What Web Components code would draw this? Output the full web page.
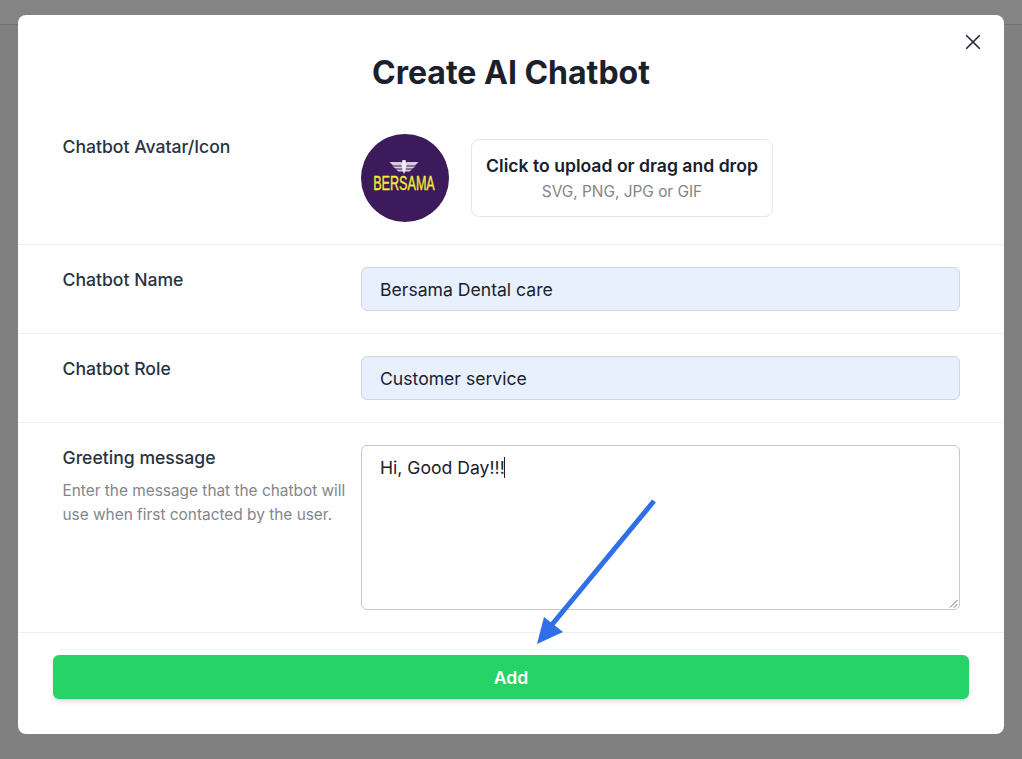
<!DOCTYPE html>
<html lang="en">
<head>
<meta charset="utf-8">
<title>Create AI Chatbot</title>
<style>
  html, body { margin: 0; height: 100%; }
  body { background: #808080; font-family: Inter, "Liberation Sans", sans-serif; overflow: hidden; }
</style>
</head>
<body>
<modal-backdrop>
  <chatbot-modal>
    <form-row label="Chatbot Avatar/Icon" variant="first">
      <avatar-upload></avatar-upload>
    </form-row>
    <form-row label="Chatbot Name">
      <text-field value="Bersama Dental care"></text-field>
    </form-row>
    <form-row label="Chatbot Role">
      <text-field value="Customer service"></text-field>
    </form-row>
    <form-row label="Greeting message" hint="Enter the message that the chatbot will use when first contacted by the user.">
      <message-area value="Hi, Good Day!!!"></message-area>
    </form-row>
  </chatbot-modal>
  <arrow-mark></arrow-mark>
</modal-backdrop>

<script>
class ModalBackdrop extends HTMLElement {
    constructor() {
        super();
        this.attachShadow({ mode: 'open' });
        this.shadowRoot.innerHTML = `
            <style>
                :host {
                    display: block;
                    position: relative;
                    width: 1022px;
                    height: 759px;
                    background: #808080;
                    overflow: hidden;
                }
                .topbar {
                    height: 24px;
                    border-bottom: 1px solid #737373;
                    background: #848484;
                }
                .layer {
                    position: absolute;
                    inset: 0;
                    padding: 15px 18px;
                    box-sizing: border-box;
                }
            </style>
            <div class="topbar"></div>
            <div class="layer"><slot></slot></div>
        `;
    }
}

class ChatbotModal extends HTMLElement {
    constructor() {
        super();
        this.attachShadow({ mode: 'open' });
        this.shadowRoot.innerHTML = `
            <style>
                :host {
                    display: block;
                    position: relative;
                    width: 986px;
                    height: 719px;
                    background: #fff;
                    border-radius: 8px;
                    font-family: Inter, "Liberation Sans", sans-serif;
                    color: #1a202c;
                }
                h1 {
                    margin: 0;
                    padding-top: 36px;
                    height: 83px;
                    box-sizing: border-box;
                    font-size: 32px;
                    line-height: 43px;
                    font-weight: 700;
                    text-align: center;
                }
                .close {
                    position: absolute;
                    top: 17.5px;
                    right: 22.5px;
                    width: 18px;
                    height: 18px;
                    padding: 0;
                    border: 0;
                    background: none;
                    display: block;
                }
                .footer {
                    padding: 22px 35px 0;
                }
                .add {
                    display: block;
                    width: 100%;
                    height: 44px;
                    border: 0;
                    border-radius: 6px;
                    background: #25d366;
                    color: #fff;
                    font: 600 17.6px Inter, "Liberation Sans", sans-serif;
                    box-shadow: 0 4px 6px -1px rgba(0, 0, 0, .1), 0 2px 4px -2px rgba(0, 0, 0, .1);
                }
            </style>
            <h1>Create AI Chatbot</h1>
            <button class="close" aria-label="Close">
                <svg width="18" height="18" viewBox="0 0 18 18" fill="none" stroke="#1f2937" stroke-width="1.6" stroke-linecap="round">
                    <path d="M2.700 2.700 15.300 15.300M15.300 2.700 2.700 15.300"/>
                </svg>
            </button>
            <slot></slot>
            <div class="footer"><button class="add">Add</button></div>
        `;
    }
}

class FormRow extends HTMLElement {
    constructor() {
        super();
        this.attachShadow({ mode: 'open' });
    }

    connectedCallback() {
        const hint = this.getAttribute('hint');
        const first = this.getAttribute('variant') === 'first';
        this.shadowRoot.innerHTML = `
            <style>
                :host {
                    display: grid;
                    grid-template-columns: 298.5px 599px;
                    padding: ${first ? '36px' : '22px'} 44px 22px 44.5px;
                    border-bottom: 1px solid #edf0f3;
                }
                .label {
                    font-size: 17.6px;
                    line-height: 26px;
                    font-weight: 500;
                    color: #283341;
                }
                .hint {
                    margin-top: 7.5px;
                    width: 292px;
                    font-size: 15.4px;
                    line-height: 24px;
                    color: #83868c;
                }
            </style>
            <div>
                <div class="label">${this.getAttribute('label')}</div>
                ${hint ? `<div class="hint">${hint}</div>` : ''}
            </div>
            <div><slot></slot></div>
        `;
    }
}

class AvatarUpload extends HTMLElement {
    constructor() {
        super();
        this.attachShadow({ mode: 'open' });
        this.shadowRoot.innerHTML = `
            <style>
                :host {
                    display: flex;
                    align-items: center;
                    gap: 22px;
                }
                .avatar {
                    width: 88px;
                    height: 88px;
                    display: block;
                    flex: none;
                }
                .drop {
                    width: 302px;
                    height: 78px;
                    box-sizing: border-box;
                    border: 1px solid #e5e7eb;
                    border-radius: 8px;
                    text-align: center;
                    padding-top: 14px;
                }
                .title {
                    font-size: 17.6px;
                    line-height: 24px;
                    font-weight: 600;
                    color: #1a202c;
                }
                .sub {
                    margin-top: 2px;
                    font-size: 15.4px;
                    line-height: 24px;
                    color: #83868c;
                }
            </style>
            <svg class="avatar" viewBox="0 0 88 88">
                <circle cx="44" cy="44" r="44" fill="#3c1a5c"/>
                <path d="M28.500 28h12l1.500 3.500H32zM57.500 28h-12L44 31.500H54zM31.500 32.500H42V34.500H34.500zM54.500 32.500H44V34.500h7.500zM35 35.500H42V37.500H37.500zM51 35.500H44V37.500h4.500z" fill="#d4cbdd"/>
                <path d="M41.500 26h3l1 4.500-1 6-1.500 3.500-1.500-3.500-1-6z" fill="#efeaf3"/>
                <g transform="translate(43 56) scale(.6 1)">
                    <text x="0" y="0" text-anchor="middle" font-family="Liberation Sans, sans-serif" font-size="21" fill="#f8ec32" stroke="#f8ec32" stroke-width=".35">BERSAMA</text>
                </g>
            </svg>
            <div class="drop">
                <div class="title">Click to upload or drag and drop</div>
                <div class="sub">SVG, PNG, JPG or GIF</div>
            </div>
        `;
    }
}

class TextField extends HTMLElement {
    constructor() {
        super();
        this.attachShadow({ mode: 'open' });
    }

    connectedCallback() {
        this.shadowRoot.innerHTML = `
            <style>
                :host { display: block; }
                .field {
                    height: 44px;
                    box-sizing: border-box;
                    padding: 0 18px;
                    display: flex;
                    align-items: center;
                    background: #e8f0fe;
                    border: 1px solid #cfd6e2;
                    border-radius: 6px;
                    font-size: 17.6px;
                    color: #1a202c;
                }
            </style>
            <div class="field">${this.getAttribute('value')}</div>
        `;
    }
}

class MessageArea extends HTMLElement {
    constructor() {
        super();
        this.attachShadow({ mode: 'open' });
    }

    connectedCallback() {
        this.shadowRoot.innerHTML = `
            <style>
                :host { display: block; }
                .area {
                    position: relative;
                    height: 165px;
                    box-sizing: border-box;
                    padding: 9px 18px;
                    background: #fff;
                    border: 1px solid #c4c8cf;
                    border-radius: 6px;
                    font-size: 17.6px;
                    line-height: 26px;
                    color: #1a202c;
                }
                .caret {
                    display: inline-block;
                    width: 1px;
                    height: 21px;
                    margin-left: -1px;
                    background: #1a202c;
                    vertical-align: -4px;
                }
                .grip {
                    position: absolute;
                    right: 1px;
                    bottom: 1px;
                }
            </style>
            <div class="area">${this.getAttribute('value')}<span class="caret"></span>
                <svg class="grip" width="9" height="9" viewBox="0 0 9 9" fill="none" stroke="#6b6b6b" stroke-width="1">
                    <path d="M1 8.500 8.500 1M5 8.500 8.500 5"/>
                </svg>
            </div>
        `;
    }
}

class ArrowMark extends HTMLElement {
    constructor() {
        super();
        this.attachShadow({ mode: 'open' });
        this.shadowRoot.innerHTML = `
            <style>
                :host {
                    display: block;
                    position: absolute;
                    left: 530px;
                    top: 490px;
                    width: 135px;
                    height: 160px;
                }
                svg { display: block; }
            </style>
            <svg width="135" height="160" viewBox="0 0 135 160">
                <path d="M124 11 20 137" stroke="#2f6fe8" stroke-width="5" fill="none"/>
                <path d="M7 154 14 127 33 142z" fill="#2f6fe8"/>
            </svg>
        `;
    }
}

customElements.define('modal-backdrop', ModalBackdrop);
customElements.define('chatbot-modal', ChatbotModal);
customElements.define('form-row', FormRow);
customElements.define('avatar-upload', AvatarUpload);
customElements.define('text-field', TextField);
customElements.define('message-area', MessageArea);
customElements.define('arrow-mark', ArrowMark);
</script>
</body>
</html>
